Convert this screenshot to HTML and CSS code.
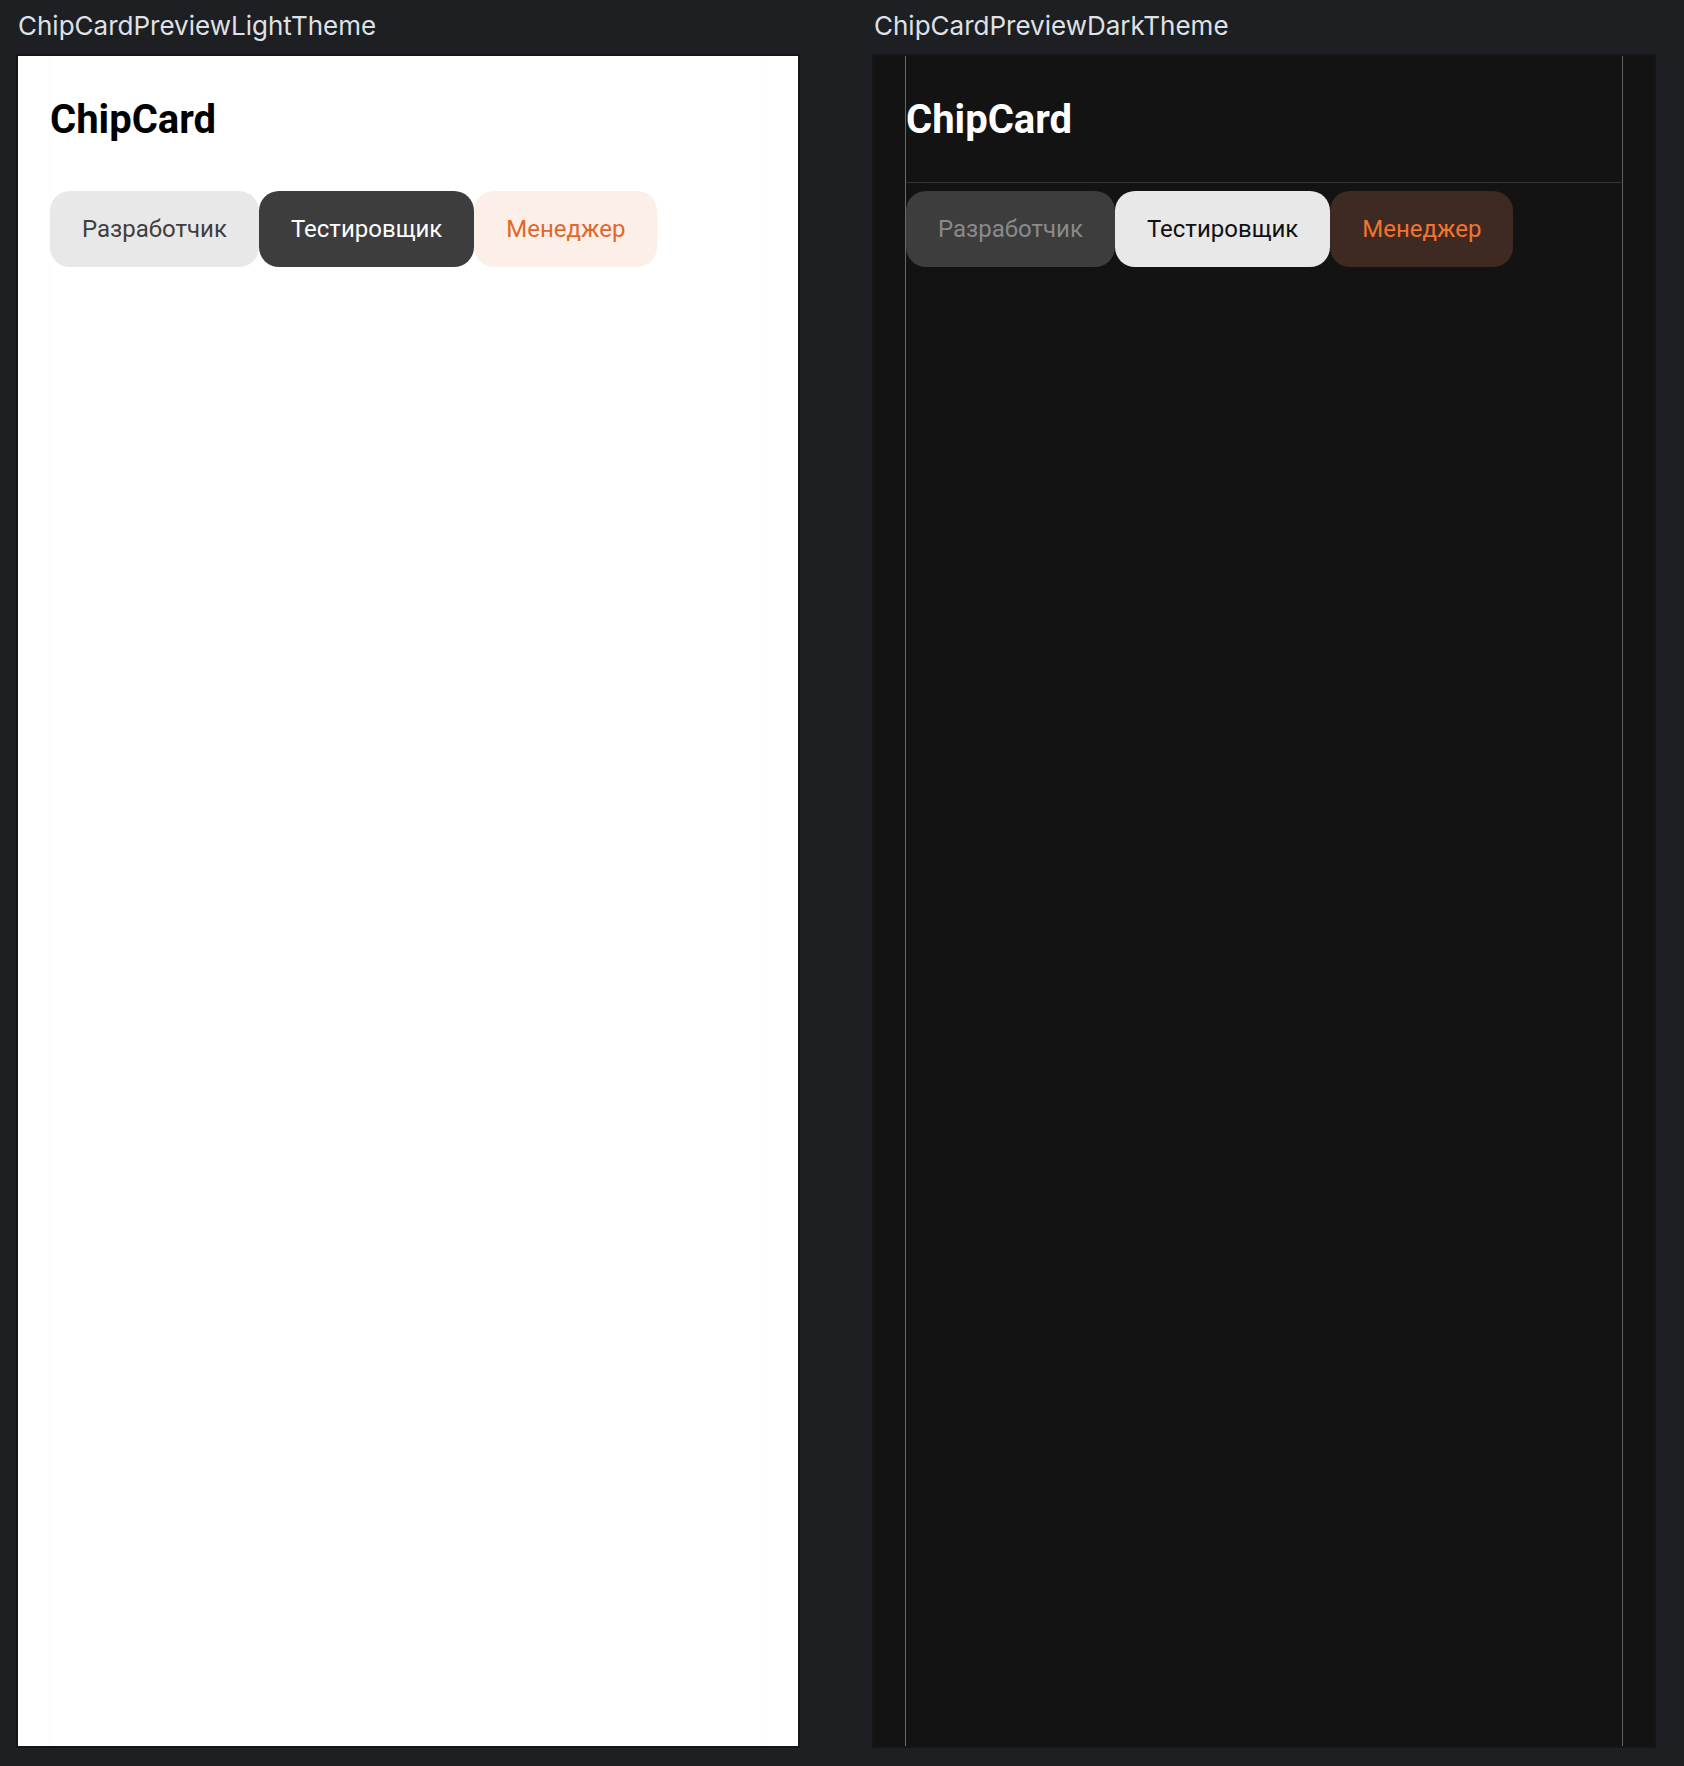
FILE: index.html
```html
<!DOCTYPE html>
<html lang="ru">
<head>
<meta charset="utf-8">
<title>ChipCard previews</title>
<link rel="stylesheet" href="styles.css">
</head>
<body>
<div class="previews">
  <section class="preview">
    <div class="preview-title">ChipCardPreviewLightTheme</div>
    <div class="panel panel-light">
      <div class="content">
        <h1 class="heading">ChipCard</h1>
        <div class="chips">
          <span class="chip chip-neutral">Разработчик</span>
          <span class="chip chip-selected">Тестировщик</span>
          <span class="chip chip-accent">Менеджер</span>
        </div>
      </div>
    </div>
  </section>
  <section class="preview">
    <div class="preview-title">ChipCardPreviewDarkTheme</div>
    <div class="panel panel-dark">
      <div class="content">
        <h1 class="heading">ChipCard</h1>
        <div class="chips">
          <span class="chip chip-neutral">Разработчик</span>
          <span class="chip chip-selected">Тестировщик</span>
          <span class="chip chip-accent">Менеджер</span>
        </div>
      </div>
    </div>
  </section>
</div>
</body>
</html>
```

FILE: styles.css
```css
html, body {
  margin: 0;
  padding: 0;
  background: #1e1f22;
}

body {
  width: 1684px;
  height: 1766px;
  overflow: hidden;
}

.previews {
  display: flex;
  gap: 72px;
  padding-left: 16px;
}

.preview {
  display: flex;
  flex-direction: column;
  width: 784px;
}

.preview-title {
  font-family: "Inter", "Noto Sans", sans-serif;
  font-size: 26px;
  line-height: 32px;
  color: #dfe1e5;
  padding: 10px 0 12px 2px;
  height: 32px;
}

.panel {
  box-sizing: border-box;
  width: 784px;
  height: 1694px;
  border: 2px solid #121212;
  padding: 0 31px;
}

.panel-light {
  background: #ffffff;
  border-color: #161616;
}

.panel-dark {
  background: #131313;
  border-color: #161617;
}

.content {
  height: 100%;
  border-left: 1px solid #fbfbfb;
  border-right: 1px solid #fdfdfd;
}

.panel-dark .content {
  border-left-color: #6a6a6a;
  border-right-color: #5e5e5e;
}

.heading {
  margin: 0;
  padding: 40px 0 39px 0;
  font-family: "Roboto", "Liberation Sans", sans-serif;
  font-weight: 700;
  font-size: 40px;
  line-height: 47px;
  border-bottom: 1px solid transparent;
}

.panel-light .heading {
  color: #000000;
}

.panel-dark .heading {
  color: #ffffff;
  border-bottom-color: #333333;
}

.chips {
  display: flex;
  margin-top: 8px;
}

.chip {
  font-family: "Roboto", "Liberation Sans", sans-serif;
  font-size: 24px;
  line-height: 28px;
  padding: 24px 32px;
  border-radius: 20px;
  white-space: nowrap;
}

.panel-light .chip-neutral {
  background: #e8e8e8;
  color: #3f3f3f;
}

.panel-light .chip-selected {
  background: #3d3d3d;
  color: #ffffff;
}

.panel-light .chip-accent {
  background: #fbefe7;
  color: #e0682c;
}

.panel-dark .chip-neutral {
  background: #3d3d3d;
  color: #8a8a8a;
}

.panel-dark .chip-selected {
  background: #e8e8e8;
  color: #111111;
}

.panel-dark .chip-accent {
  background: #3e2a22;
  color: #f27430;
}
```
